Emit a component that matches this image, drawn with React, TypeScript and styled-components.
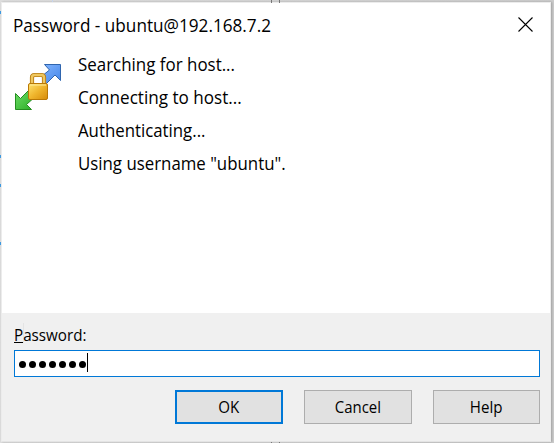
import React from "react";
import styled, { createGlobalStyle } from "styled-components";

const GlobalStyle = createGlobalStyle`
  * { box-sizing: border-box; }
  body { margin: 0; overflow: hidden; background: #d2d2d2; }
`;

const Desktop = styled.div`
  position: relative;
  width: 554px;
  height: 443px;
  padding: 2px 3px 1px 1px;
  background: linear-gradient(90deg, #dedede, #cccccc);
  font-family: "Open Sans", "Noto Sans", sans-serif;
  color: #000;
`;

const EdgeMark = styled.i<{ $x: number; $y: number; $w: number; $h: number; $color: string }>`
  position: absolute;
  left: ${(p) => p.$x}px;
  top: ${(p) => p.$y}px;
  width: ${(p) => p.$w}px;
  height: ${(p) => p.$h}px;
  background: ${(p) => p.$color};
`;

const Dialog = styled.section`
  display: flex;
  flex-direction: column;
  width: 550px;
  height: 440px;
  border: 1px solid #ececec;
  border-bottom-color: #e4e4e4;
  background: #fff;
  box-shadow: 1px 0 2px rgba(0, 0, 0, 0.22);
`;

const TitleBar = styled.header`
  display: flex;
  justify-content: space-between;
  height: 48px;
  padding: 9px 15px 0 11px;
`;

const Label = styled.span<{ $scale: number; $size: number; $origin?: string }>`
  display: inline-block;
  font-size: ${(p) => p.$size}px;
  line-height: 26px;
  white-space: nowrap;
  transform: scaleX(${(p) => p.$scale});
  transform-origin: ${(p) => p.$origin ?? "left"} center;
`;

const CloseButton = styled.button`
  display: block;
  width: 19px;
  height: 19px;
  margin-top: 3px;
  padding: 2px;
  border: 0;
  background: none;
`;

const Content = styled.main`
  display: flex;
  flex: 1;
  padding: 0 11px;
`;

const LockIcon = styled.svg`
  width: 50px;
  height: 50px;
  margin: 9px 15px 0 0;
`;

const Messages = styled.div`
  display: flex;
  flex-direction: column;
  gap: 7px;
`;

const Footer = styled.footer`
  height: 128px;
  padding: 9px 10px 0 12px;
  background: #f0f0f0;
`;

const Underlined = styled.span`
  box-shadow: 0 1px 0 #000;
  display: inline-block;
  height: 20px;
  line-height: 26px;
  margin-top: -3px;
`;

const Field = styled.div`
  display: flex;
  align-items: center;
  gap: 3px;
  height: 27px;
  margin-top: 2px;
  padding: 0 4px;
  border: 1px solid #0078d7;
  background: #fff;
`;

const Dot = styled.i`
  width: 7px;
  height: 7px;
  margin-top: 2px;
  border-radius: 50%;
  background: #000;
`;

const Caret = styled.i`
  width: 1px;
  height: 19px;
  margin: -2px 0 0 -2px;
  background: #000;
`;

const Actions = styled.div`
  display: flex;
  justify-content: flex-end;
  gap: 21px;
  margin-top: 13px;
`;

const Button = styled.button<{ $primary?: boolean; $width?: number }>`
  display: flex;
  align-items: center;
  justify-content: center;
  width: ${(p) => p.$width ?? 108}px;
  height: 34px;
  padding: 0;
  border: ${(p) => (p.$primary ? "2px solid #0078d7" : "1px solid #adadad")};
  background: #e1e1e1;
  color: #000;
  font-family: inherit;
`;

const messages = [
  { text: "Searching for host...", scale: 0.967 },
  { text: "Connecting to host...", scale: 0.977 },
  { text: "Authenticating...", scale: 0.96 },
  { text: 'Using username "ubuntu".', scale: 0.962 },
];

export default function App() {
  return (
    <>
      <GlobalStyle />
      <Desktop>
        {[271, 279].map((x) => (
          <React.Fragment key={x}>
            <EdgeMark $x={x} $y={0} $w={1} $h={3} $color="#777" />
            <EdgeMark $x={x} $y={442} $w={1} $h={1} $color="#777" />
          </React.Fragment>
        ))}
        <EdgeMark $x={52} $y={0} $w={1} $h={2} $color="#c5d3ec" />
        {[11, 155, 184, 242].map((y) => (
          <EdgeMark key={y} $x={0} $y={y} $w={1} $h={3} $color="#3d99e0" />
        ))}
        <Dialog>
          <TitleBar>
            <Label $size={17.5} $scale={0.981}>Password - ubuntu@192.168.7.2</Label>
            <CloseButton aria-label="Close">
              <svg width="15" height="15" viewBox="0 0 15 15" display="block">
                <path d="M.5 .5l14 14M14.5 .5l-14 14" stroke="#000" strokeWidth="1.1" />
              </svg>
            </CloseButton>
          </TitleBar>
          <Content>
            <LockIcon viewBox="0 0 50 50">
              <defs>
                <linearGradient id="blue" x1="0" y1="0" x2="1" y2="1">
                  <stop stopColor="#85b7ff" /><stop offset="1" stopColor="#4385e9" />
                </linearGradient>
                <linearGradient id="green" x1="0" y1="0" x2="1" y2="1">
                  <stop stopColor="#70df69" /><stop offset="1" stopColor="#27aa22" />
                </linearGradient>
                <linearGradient id="gold" x1="0" y1="0" x2="1" y2="1">
                  <stop stopColor="#ffe36d" /><stop offset=".5" stopColor="#efb52d" /><stop offset="1" stopColor="#d68a08" />
                </linearGradient>
              </defs>
              <path d="M31.5 4.5h16v16l-5.5-5.5-9 9-6.5-6 10-8z" fill="url(#blue)" stroke="#2f65ae" />
              <path d="M2.5 33.5l5 5 9-9 7 6-10 9 5 5h-16z" fill="url(#green)" stroke="#258d20" />
              <path d="M19 25V17.5q0-2.5 2.5-2.5h7q2.5 0 2.5 2.5V25" fill="#fff" stroke="#b77b13" strokeWidth="4.2" />
              <path d="M19 25V17.5q0-2.5 2.5-2.5h7q2.5 0 2.5 2.5V25" fill="none" stroke="#efc75f" strokeWidth="2.4" />
              <rect x="15.5" y="23.5" width="19" height="16" rx="1.5" fill="url(#gold)" stroke="#b97806" />
              <path d="M17 25h16" stroke="#ffec9c" />
            </LockIcon>
            <Messages>
              {messages.map((m) => (
                <Label key={m.text} $size={17.5} $scale={m.scale}>{m.text}</Label>
              ))}
            </Messages>
          </Content>
          <Footer>
            <Label $size={16.8} $scale={0.905}><Underlined>P</Underlined>assword:</Label>
            <Field>
              {Array.from({ length: 7 }, (_, i) => <Dot key={i} />)}
              <Caret />
            </Field>
            <Actions>
              <Button $primary><Label $size={16.8} $scale={0.9} $origin="center">OK</Label></Button>
              <Button><Label $size={16.8} $scale={0.89} $origin="center">Cancel</Label></Button>
              <Button $width={107}><Label $size={16.8} $scale={0.9} $origin="center">Help</Label></Button>
            </Actions>
          </Footer>
        </Dialog>
      </Desktop>
    </>
  );
}
